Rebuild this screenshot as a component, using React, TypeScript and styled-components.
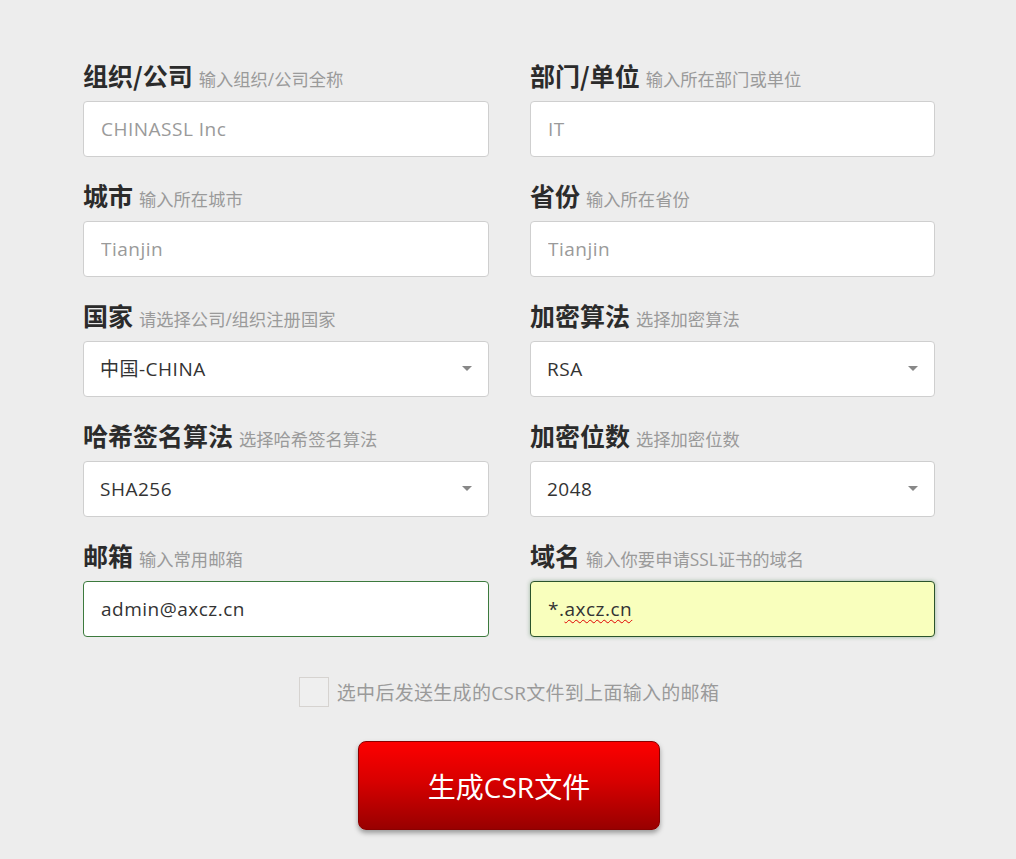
import React from "react";
import styled, { createGlobalStyle } from "styled-components";

const GlobalStyle = createGlobalStyle`
  html, body {
    margin: 0;
    padding: 0;
    background: #ededed;
  }
  body {
    font-family: "Open Sans", "Noto Sans CJK SC", sans-serif;
    color: #333;
  }
  * { box-sizing: border-box; }
`;

const Page = styled.div`
  width: 1016px;
  min-height: 859px;
  background: #ededed;
  padding-top: 58px;
`;

const Form = styled.form`
  width: 852px;
  margin-left: 83px;
`;

const Grid = styled.div`
  display: grid;
  grid-template-columns: 406px 405px;
  column-gap: 41px;
  row-gap: 21px;
`;

const Field = styled.div`
  display: flex;
  flex-direction: column;
`;

const Label = styled.label`
  display: flex;
  align-items: baseline;
  height: 34px;
  line-height: 34px;
  margin-bottom: 9px;
  white-space: nowrap;
`;

const LabelMain = styled.span`
  font-family: "Noto Sans CJK SC", sans-serif;
  font-size: 25px;
  font-weight: 700;
  color: #2b2b2b;
`;

const LabelHint = styled.span`
  font-family: "Open Sans", "Noto Sans CJK SC", sans-serif;
  font-size: 17.3px;
  color: #9a9a9a;
  margin-left: 6px;
`;

type Tone = "normal" | "valid" | "active";

const InputWrap = styled.div`
  position: relative;
`;

const TextInput = styled.input<{ $tone?: Tone }>`
  width: 100%;
  height: 56px;
  padding: 0 17px;
  font-family: "Open Sans", "Noto Sans CJK SC", sans-serif;
  font-size: 19px;
  letter-spacing: 0.5px;
  color: #333;
  background: ${(p) => (p.$tone === "active" ? "#f9ffbd" : "#fff")};
  border: 1px solid
    ${(p) =>
      p.$tone === "valid" ? "#3c7a3d" : p.$tone === "active" ? "#2b542c" : "#cfcfcf"};
  border-radius: 4px;
  box-shadow: ${(p) =>
    p.$tone === "active" ? "0 0 4px rgba(60, 118, 61, 0.45)" : "none"};
  outline: none;
  &::placeholder {
    color: #9a9a9a;
    opacity: 1;
  }
`;

const SpellOverlay = styled.div`
  position: absolute;
  inset: 0;
  padding: 0 18px;
  display: flex;
  align-items: center;
  font-family: "Open Sans", "Noto Sans CJK SC", sans-serif;
  font-size: 19px;
  letter-spacing: 0.5px;
  color: transparent;
  pointer-events: none;
  white-space: pre;
`;

const Misspelt = styled.span`
  text-decoration: underline wavy #e00000;
  text-decoration-thickness: 1px;
  text-underline-offset: 3px;
`;

const SelectWrap = styled.div`
  position: relative;
  &::after {
    content: "";
    position: absolute;
    right: 17px;
    top: 25px;
    border-left: 5px solid transparent;
    border-right: 5px solid transparent;
    border-top: 5px solid #888;
    pointer-events: none;
  }
`;

const Select = styled.select`
  width: 100%;
  height: 56px;
  padding: 0 16px;
  font-family: "Open Sans", "Noto Sans CJK SC", sans-serif;
  font-size: 19px;
  letter-spacing: 0.5px;
  color: #333;
  background: #fff;
  border: 1px solid #cfcfcf;
  border-radius: 4px;
  appearance: none;
  -webkit-appearance: none;
  outline: none;
`;

const CheckRow = styled.label`
  display: flex;
  justify-content: center;
  align-items: center;
  gap: 8px;
  margin-top: 40px;
  font-family: "Open Sans", "Noto Sans CJK SC", sans-serif;
  font-size: 19px;
  letter-spacing: 0.3px;
  color: #9a9a9a;
`;

const CheckBox = styled.span`
  display: inline-block;
  width: 30px;
  height: 30px;
  background: #efefef;
  border: 1px solid #d6d3d0;
`;

const ButtonRow = styled.div`
  display: flex;
  justify-content: center;
  margin-top: 34px;
`;

const SubmitButton = styled.button`
  width: 302px;
  height: 89px;
  border: 1px solid #8a0000;
  border-radius: 8px;
  background: linear-gradient(to bottom, #fd0000 0%, #d80000 45%, #980000 100%);
  box-shadow: 0 3px 5px rgba(0, 0, 0, 0.35);
  color: #fff;
  font-family: "Open Sans", "Noto Sans CJK SC", sans-serif;
  font-size: 28px;
  cursor: pointer;
  padding: 0;
`;

type FieldDef =
  | { kind: "input"; label: string; hint: string; value?: string; placeholder?: string; tone?: Tone }
  | { kind: "select"; label: string; hint: string; options: string[] };

const fields: FieldDef[] = [
  { kind: "input", label: "组织/公司", hint: "输入组织/公司全称", placeholder: "CHINASSL Inc" },
  { kind: "input", label: "部门/单位", hint: "输入所在部门或单位", placeholder: "IT" },
  { kind: "input", label: "城市", hint: "输入所在城市", placeholder: "Tianjin" },
  { kind: "input", label: "省份", hint: "输入所在省份", placeholder: "Tianjin" },
  { kind: "select", label: "国家", hint: "请选择公司/组织注册国家", options: ["中国-CHINA"] },
  { kind: "select", label: "加密算法", hint: "选择加密算法", options: ["RSA", "ECC"] },
  { kind: "select", label: "哈希签名算法", hint: "选择哈希签名算法", options: ["SHA256", "SHA1"] },
  { kind: "select", label: "加密位数", hint: "选择加密位数", options: ["2048", "4096"] },
  { kind: "input", label: "邮箱", hint: "输入常用邮箱", value: "admin@axcz.cn", tone: "valid" },
];

export default function App() {
  return (
    <>
      <GlobalStyle />
      <Page>
        <Form onSubmit={(e) => e.preventDefault()}>
          <Grid>
            {fields.map((f) => (
              <Field key={f.label}>
                <Label>
                  <LabelMain>{f.label}</LabelMain>
                  <LabelHint>{f.hint}</LabelHint>
                </Label>
                {f.kind === "input" ? (
                  <InputWrap>
                    <TextInput
                      $tone={f.tone}
                      placeholder={f.placeholder}
                      defaultValue={f.value}
                    />
                  </InputWrap>
                ) : (
                  <SelectWrap>
                    <Select defaultValue={f.options[0]}>
                      {f.options.map((o) => (
                        <option key={o}>{o}</option>
                      ))}
                    </Select>
                  </SelectWrap>
                )}
              </Field>
            ))}
            <Field>
              <Label>
                <LabelMain>域名</LabelMain>
                <LabelHint>输入你要申请SSL证书的域名</LabelHint>
              </Label>
              <InputWrap>
                <TextInput $tone="active" defaultValue="*.axcz.cn" spellCheck={false} />
                <SpellOverlay aria-hidden>
                  <span>*.</span>
                  <Misspelt>axcz.cn</Misspelt>
                </SpellOverlay>
              </InputWrap>
            </Field>
          </Grid>
          <CheckRow>
            <CheckBox />
            <span>选中后发送生成的CSR文件到上面输入的邮箱</span>
          </CheckRow>
          <ButtonRow>
            <SubmitButton type="submit">生成CSR文件</SubmitButton>
          </ButtonRow>
        </Form>
      </Page>
    </>
  );
}
